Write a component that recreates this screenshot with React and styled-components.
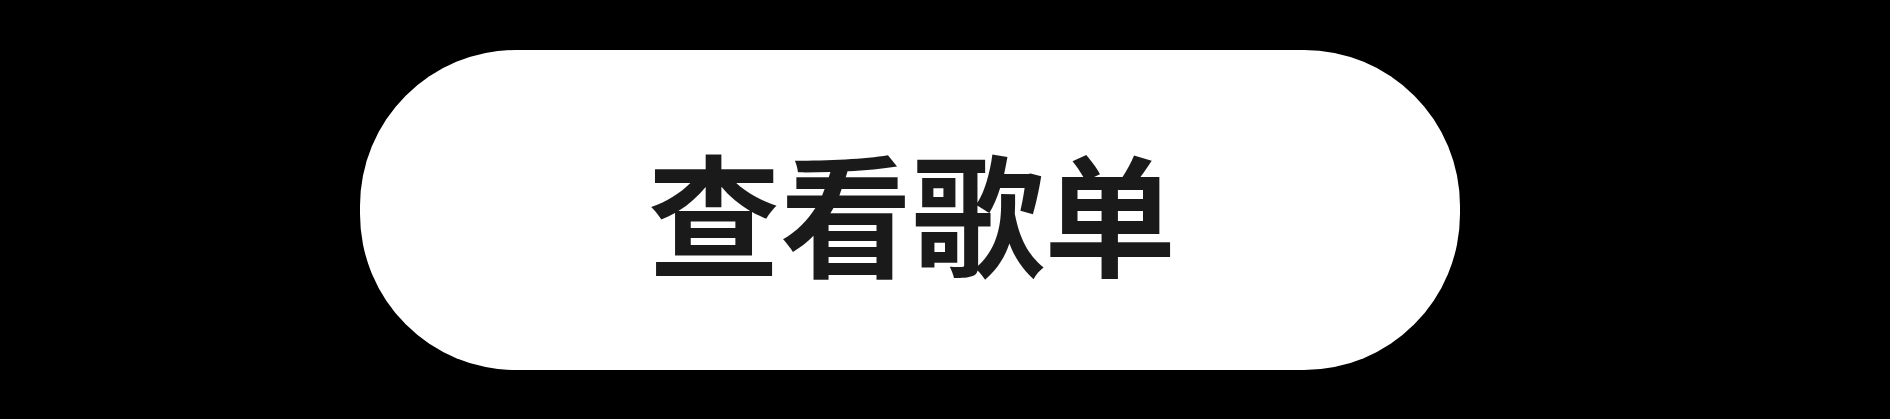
import React from 'react'
import styled, { createGlobalStyle } from 'styled-components'

const GlobalStyle = createGlobalStyle`
  html, body {
    margin: 0;
    padding: 0;
    background: #000;
  }
`

const Stage = styled.div`
  width: 1890px;
  height: 419px;
  background: #000;
  display: flex;
  align-items: center;
  padding-left: 360px;
  box-sizing: border-box;
`

const PillButton = styled.button`
  width: 1100px;
  height: 320px;
  border: none;
  border-radius: 156px;
  background: #fff;
  display: flex;
  align-items: center;
  justify-content: center;
  padding: 0 0 0 4px;
  cursor: pointer;
  font-family: "Noto Sans CJK SC", "Noto Sans", sans-serif;
  font-weight: 700;
  font-size: 132px;
  line-height: 1;
  color: #1a1a1a;
`

function App() {
  return (
    <>
      <GlobalStyle />
      <Stage>
        <PillButton>查看歌单</PillButton>
      </Stage>
    </>
  )
}

export default App
